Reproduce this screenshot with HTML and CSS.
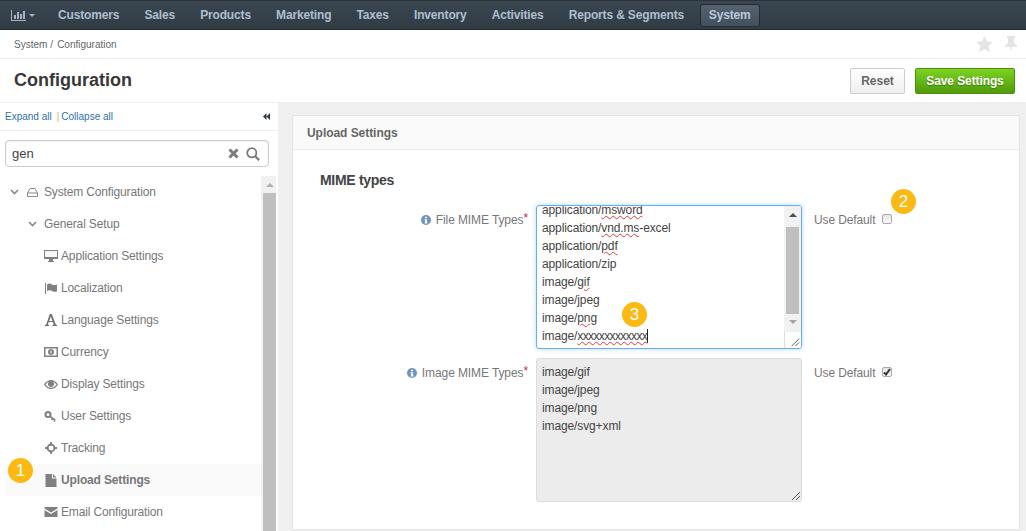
FILE: index.html
```html
<!DOCTYPE html>
<html lang="en">
<head>
<meta charset="utf-8">
<title>Configuration</title>
<link rel="stylesheet" href="styles.css">
</head>
<body>
<nav class="topnav">
  <div class="nav-chart">
    <svg width="15" height="11" viewBox="0 0 15 11"><path d="M0 0h1v10h14v1H0z M3 5h2v4H3z M6 2h2v7H6z M9 4h2v5H9z M12 1h2v8h-2z" fill="#a3b5c7"/></svg>
    <span class="caret"></span>
  </div>
  <a class="nav-item">Customers</a>
  <a class="nav-item">Sales</a>
  <a class="nav-item">Products</a>
  <a class="nav-item">Marketing</a>
  <a class="nav-item">Taxes</a>
  <a class="nav-item">Inventory</a>
  <a class="nav-item">Activities</a>
  <a class="nav-item">Reports &amp; Segments</a>
  <a class="nav-item nav-active">System</a>
</nav>

<div class="crumbs">
  <span>System</span><span class="crumb-sep">/</span><span>Configuration</span>
  <div class="crumb-icons">
    <svg width="17" height="16" viewBox="0 0 17 16"><path d="M8.5 0l2.5 5.4 6 .7-4.4 4 1.2 5.9-5.3-3-5.3 3 1.2-5.9L0 6.1l6-.7z" fill="#e4e4e4"/></svg>
    <svg width="12" height="16" viewBox="0 0 12 16"><path d="M2 0h8v1.500l-1 1v4.500l3 2.500v1.500H7l-1 5-1-5H0V9.500L3 7V2.500l-1-1z" fill="#e4e4e4"/></svg>
  </div>
</div>

<header class="titlebar">
  <h1>Configuration</h1>
  <div class="actions">
    <button class="btn btn-reset">Reset</button>
    <button class="btn btn-save">Save Settings</button>
  </div>
</header>

<main class="layout">
  <aside class="sidebar">
    <div class="side-head">
      <a>Expand all</a><span class="pipe">|</span><a>Collapse all</a>
      <svg class="collapse" width="7" height="7" viewBox="0 0 7 7"><path d="M3.500 0v7L0 3.500z M7 0v7L3.500 3.500z" fill="#2f3a44"/></svg>
    </div>
    <div class="search">
      <span class="search-text">gen</span>
      <svg width="11" height="11" viewBox="0 0 11 11"><path d="M1.500 1.500l8 8M9.500 1.500l-8 8" stroke="#7a7a7a" stroke-width="3"/></svg>
      <svg width="14" height="14" viewBox="0 0 14 14"><circle cx="5.800" cy="5.800" r="4.600" fill="none" stroke="#7a7a7a" stroke-width="1.800"/><path d="M9.200 9.200l4 4" stroke="#7a7a7a" stroke-width="2.200"/></svg>
    </div>
    <div class="tree-wrap">
      <ul class="tree">
        <li class="row lvl0">
          <svg class="chev" width="9" height="6" viewBox="0 0 9 6"><path d="M1 1l3.500 3.500L8 1" fill="none" stroke="#888" stroke-width="1.600"/></svg>
          <svg class="hdd" width="11" height="9" viewBox="0 0 11 9"><path d="M3 .5h5L10.500 5v3.500H.5V5zM.5 5h10" fill="none" stroke="#888"/></svg>
          <span>System Configuration</span>
        </li>
        <li class="row lvl1">
          <svg class="chev" width="9" height="6" viewBox="0 0 9 6"><path d="M1 1l3.500 3.500L8 1" fill="none" stroke="#888" stroke-width="1.600"/></svg>
          <span>General Setup</span>
        </li>
        <li class="row lvl2">
          <svg class="ico" width="14" height="12" viewBox="0 0 14 12"><path d="M0 0h14v9H9v2h1v1H4v-1h1V9H0z" fill="#808080"/><path d="M1 1h12v6H1z" fill="#f6f6f6"/></svg>
          <span>Application Settings</span>
        </li>
        <li class="row lvl2">
          <svg class="ico" width="14" height="11" viewBox="0 0 14 11"><path d="M1 0h1v11H1z" fill="#808080"/><path d="M3 1.500c2-1.500 3.500-1 5 0s3 .5 5 0v7c-2 .5-3.500.5-5-.500s-3-1-5 0z" fill="#808080"/></svg>
          <span>Localization</span>
        </li>
        <li class="row lvl2">
          <svg class="ico" width="14" height="12" viewBox="0 0 14 12"><path d="M5.800 0h2l4 10.500 1.200.5v1H8.500v-1l1.200-.5-.9-2.500H4.700l-.9 2.500 1.200.5v1H1v-1l1.200-.5zM6.800 2.500L5.200 7h3.200z" fill="#707070"/></svg>
          <span>Language Settings</span>
        </li>
        <li class="row lvl2">
          <svg class="ico" width="14" height="10" viewBox="0 0 14 10"><path d="M0 0h14v10H0z" fill="#808080"/><path d="M1.500 1.500h11v7h-11z" fill="#fff"/><circle cx="7" cy="5" r="3" fill="#808080"/><path d="M6.500 3.500h1v3h-1z" fill="#fff"/></svg>
          <span>Currency</span>
        </li>
        <li class="row lvl2">
          <svg class="ico" width="14" height="9" viewBox="0 0 14 9"><path d="M0 4.500C2 1.500 4.500 0 7 0s5 1.500 7 4.500C12 7.500 9.500 9 7 9S2 7.500 0 4.500z" fill="#808080"/><path d="M1.500 4.500C3 2.700 4 2 5 1.700a3 3 0 1 0 4 0c1 .3 2 1 3.500 2.800C11 6.500 9 7.800 7 7.800S3 6.500 1.500 4.500z" fill="#fff"/></svg>
          <span>Display Settings</span>
        </li>
        <li class="row lvl2">
          <svg class="ico" width="13" height="11" viewBox="0 0 13 11"><circle cx="3.500" cy="3.500" r="2.500" fill="none" stroke="#808080" stroke-width="2"/><path d="M5.500 5.500l5 3.500M8 7.500l-1 1.500M10.500 9l-.8 1.500" stroke="#808080" stroke-width="1.600"/></svg>
          <span>User Settings</span>
        </li>
        <li class="row lvl2">
          <svg class="ico" width="12" height="12" viewBox="0 0 12 12"><circle cx="6" cy="6" r="3.500" fill="none" stroke="#808080" stroke-width="1.800"/><path d="M6 0v3.500M6 8.500V12M0 6h3.500M8.500 6H12" stroke="#808080" stroke-width="1.800"/></svg>
          <span>Tracking</span>
        </li>
        <li class="row lvl2 row-active">
          <svg class="ico" width="11" height="13" viewBox="0 0 11 13"><path d="M0 0h6.500v4.500H11V13H0zM7.500 0L11 3.500H7.500z" fill="#808080"/></svg>
          <span>Upload Settings</span>
        </li>
        <li class="row lvl2">
          <svg class="ico" width="13" height="10" viewBox="0 0 13 10"><path d="M0 0h13v1.500L6.500 5.500 0 1.500zM0 3l6.500 4L13 3v7H0z" fill="#808080"/></svg>
          <span>Email Configuration</span>
        </li>
      </ul>
      <div class="sb">
        <span class="arrow-up"></span>
        <div class="sb-thumb"></div>
      </div>
    </div>
  </aside>

  <section class="content">
    <div class="panel">
      <div class="panel-head">Upload Settings</div>
      <div class="panel-body">
        <h2>MIME types</h2>
        <div class="form-row">
          <label class="flabel">
            <svg width="10" height="10" viewBox="0 0 10 10"><circle cx="5" cy="5" r="5" fill="#6f94c1"/><path d="M4 1.800h2v1.500H4zM3.600 4.200h2.400v3.300h.6v1H3.600v-1h.6V5.200h-.6z" fill="#fff"/></svg>
            <span>File MIME Types</span><i>*</i>
          </label>
          <div class="ta ta-focus">
            <div class="ta-lines">
              <div>application/<u>msword</u></div>
              <div>application/<u>vnd.ms</u>-excel</div>
              <div>application/<u>pdf</u></div>
              <div>application/zip</div>
              <div>image/<u>gif</u></div>
              <div>image/jpeg</div>
              <div>image/<u>png</u></div>
              <div>image/<u class="xs">xxxxxxxxxxxxx</u><span class="cursor"></span></div>
            </div>
            <div class="ta-sb">
              <span class="arrow-up dark"></span>
              <div class="ta-thumb"></div>
              <span class="arrow-down"></span>
            </div>
            <svg class="grip grip-box" width="17" height="17" viewBox="0 0 17 17"><path d="M7 15l8-8M11 15l4-4" stroke="#555" stroke-width="1"/></svg>
          </div>
          <div class="usedef">
            <span>Use Default</span><span class="cb"></span>
          </div>
        </div>
        <div class="form-row">
          <label class="flabel">
            <svg width="10" height="10" viewBox="0 0 10 10"><circle cx="5" cy="5" r="5" fill="#6f94c1"/><path d="M4 1.800h2v1.500H4zM3.600 4.200h2.400v3.300h.6v1H3.600v-1h.6V5.200h-.6z" fill="#fff"/></svg>
            <span>Image MIME Types</span><i>*</i>
          </label>
          <div class="ta ta-off">
            <div class="ta-lines ta-lines-off">
              <div>image/gif</div>
              <div>image/jpeg</div>
              <div>image/png</div>
              <div>image/svg+xml</div>
            </div>
            <svg class="grip" width="10" height="10" viewBox="0 0 10 10"><path d="M1 9l8-8M5 9l4-4" stroke="#555" stroke-width="1"/></svg>
          </div>
          <div class="usedef">
            <span>Use Default</span>
            <span class="cb cb-on"><svg width="8" height="8" viewBox="0 0 8 8"><path d="M1 4.500l2 2L7 1" fill="none" stroke="#333" stroke-width="2"/></svg></span>
          </div>
        </div>
      </div>
    </div>
  </section>
</main>

<span class="badge b1">1</span>
<span class="badge b2">2</span>
<span class="badge b3">3</span>
</body>
</html>
```

FILE: styles.css
```css
* { box-sizing: border-box; }
html, body { margin: 0; padding: 0; height: 531px; overflow: hidden; }
body { font-family: "Liberation Sans", Arial, sans-serif; font-size: 12px; color: #666; background: #fff; position: relative; }

.topnav { height: 30px; display: flex; align-items: center; gap: 25.1px; padding-left: 11px; background: linear-gradient(#3a4650, #313c45); border-top: 1px solid #2a333b; border-bottom: 1px solid #20282f; }
.nav-chart { display: flex; align-items: center; gap: 3px; width: 21.9px; flex: none; }
.nav-chart svg { flex: none; }
.caret { border-left: 3px solid transparent; border-right: 3px solid transparent; border-top: 3px solid #a3b5c7; flex: none; }
.nav-item { font-weight: bold; color: #aebfd0; font-size: 12px; letter-spacing: -0.15px; white-space: nowrap; }
.nav-active { display: flex; align-items: center; justify-content: center; width: 60px; height: 23px; margin-left: -9.4px; color: #b8cadb; background: linear-gradient(#566270, #434f5b); border: 1px solid #232b32; border-radius: 3px; }

.crumbs { height: 29px; display: flex; align-items: center; padding: 0 9px 0 14px; font-size: 10px; color: #666; border-bottom: 1px solid #efefef; }
.crumb-sep { margin: 0 4px 0 3px; }
.crumb-icons { margin-left: auto; display: flex; gap: 12px; align-items: center; }

.titlebar { height: 44px; display: flex; align-items: center; justify-content: space-between; padding: 0 11px 0 14px; border-bottom: 1px solid #efefef; }
h1 { margin: 0; font-size: 18px; font-weight: bold; color: #383838; }
.actions { display: flex; gap: 10px; }
.btn { height: 26px; font-family: inherit; font-size: 12px; font-weight: bold; border-radius: 2px; padding: 0; }
.btn-reset { width: 55px; color: #666; background: linear-gradient(#fff, #efefef); border: 1px solid #ccc; }
.btn-save { width: 100px; color: #fff; letter-spacing: -0.1px; background: linear-gradient(#7ed321, #4f9a0b); border: 1px solid #4a900d; text-shadow: 0 1px 1px #3a7a05; }

.layout { display: flex; height: 429px; }
.sidebar { width: 278px; flex: none; background: #fff; display: flex; flex-direction: column; }
.side-head { height: 28px; flex: none; display: flex; align-items: center; padding: 0 8px 0 5px; font-size: 10px; color: #2e6fb0; border-bottom: 1px solid #efefef; }
.pipe { margin: 0 2px 0 5px; color: #d9a766; }
.collapse { margin-left: auto; }
.search { height: 27px; flex: none; margin: 9px 9px 9px 5px; display: flex; align-items: center; gap: 7px; padding: 0 8px 0 6px; border: 1px solid #ccc; border-radius: 4px; box-shadow: inset 0 1px 2px #eee; }
.search-text { font-size: 13px; line-height: 23px; height: 23px; margin-top: -1px; color: #444; margin-right: auto; }

.tree-wrap { flex: 1; display: flex; min-height: 0; overflow: hidden; }
.tree { list-style: none; margin: 0; padding: 0 0 0 5px; width: 261px; flex: none; }
.row { height: 32px; display: flex; align-items: center; color: #777; letter-spacing: -0.15px; }
.lvl0 { padding-left: 5px; }
.lvl0 .chev { margin-right: 8px; }
.lvl0 .hdd { margin-right: 6px; }
.lvl1 { padding-left: 23px; }
.lvl1 .chev { margin-right: 7px; }
.lvl2 { padding-left: 39px; }
.ico { width: 14px; flex: none; margin-right: 3px; }
.row-active { background: #fafafa; font-weight: bold; }
.sb { width: 15px; padding-left: 2px; background: #f1f1f1; display: flex; flex-direction: column; align-items: center; flex: none; }
.arrow-up { flex: none; margin: 7px 0 6px; border-left: 4px solid transparent; border-right: 4px solid transparent; border-bottom: 4px solid #b3b3b3; }
.arrow-up.dark { border-bottom-color: #4d4d4d; margin: 7px 0 10px; }
.arrow-down { flex: none; margin: 6px 0 0; border-left: 4px solid transparent; border-right: 4px solid transparent; border-top: 4px solid #a3a3a3; }
.sb-thumb { width: 13px; flex: 1; background: #bfbfbf; }

.content { flex: 1; background: #f0f0f0; padding: 12px 6px 2px 14px; min-width: 0; }
.panel { height: 415px; background: #fff; border: 1px solid #e3e3e3; }
.panel-head { height: 34px; padding: 0 14px; display: flex; align-items: center; font-weight: bold; color: #666; border-bottom: 1px solid #e8e8e8; background: #fafafa; letter-spacing: -0.05px; }
.panel-body { padding: 22px 0 0 27px; }
h2 { margin: 0 0 17px; font-size: 14px; line-height: 16px; font-weight: bold; color: #444; letter-spacing: -0.3px; }

.form-row { display: flex; align-items: flex-start; margin-bottom: 9px; }
.flabel { width: 216px; padding: 8px 8px 0 0; display: flex; align-items: center; justify-content: flex-end; color: #777; flex: none; line-height: 14px; letter-spacing: -0.1px; }
.flabel svg { margin-right: 5px; }
.flabel i { font-style: normal; color: #c7254e; margin-left: 0; position: relative; top: -2px; }
.ta { position: relative; width: 266px; height: 144px; border-radius: 3px; flex: none; overflow: hidden; font-size: 12px; color: #444; }
.ta-focus { border: 1px solid #66afe9; box-shadow: 0 0 4px rgba(102,175,233,.5); }
.ta-off { background: #ececec; border: 1px solid #ddd; }
.ta-lines { line-height: 18px; padding: 0 0 0 5px; margin-top: -5px; white-space: nowrap; letter-spacing: -0.12px; }
.ta-lines-off { margin-top: 0; padding-top: 4px; }
u { text-decoration: underline wavy #e23b3b 1px; text-underline-offset: 1px; }
u.xs { letter-spacing: -0.62px; }
.cursor { display: inline-block; width: 1px; height: 14px; background: #222; vertical-align: -3px; }
.ta-sb { position: absolute; right: 0; top: 0; width: 17px; height: 125px; background: #f1f1f1; display: flex; flex-direction: column; align-items: center; }
.ta-thumb { width: 13px; height: 87px; background: #bfbfbf; flex: none; }
.grip { position: absolute; right: 0; bottom: 0; }
.grip-box { background: #fff; border-left: 1px solid #ddd; border-top: 1px solid #eee; }

.usedef { margin-left: 12px; padding-top: 8px; display: flex; align-items: flex-start; gap: 7px; color: #777; line-height: 14px; letter-spacing: -0.12px; }
.cb { width: 10px; height: 10px; margin-top: 1px; border: 1px solid #aaa; border-radius: 2px; background: linear-gradient(#e6e6e6, #f7f7f7); display: flex; align-items: center; justify-content: center; }

.badge { position: absolute; width: 25px; height: 25px; border-radius: 50%; background: #fdb913; color: #fff; font-size: 17px; line-height: 25px; text-align: center; }
.b1 { left: 8px; top: 458px; }
.b2 { left: 891px; top: 189px; }
.b3 { left: 622px; top: 302px; }
```
